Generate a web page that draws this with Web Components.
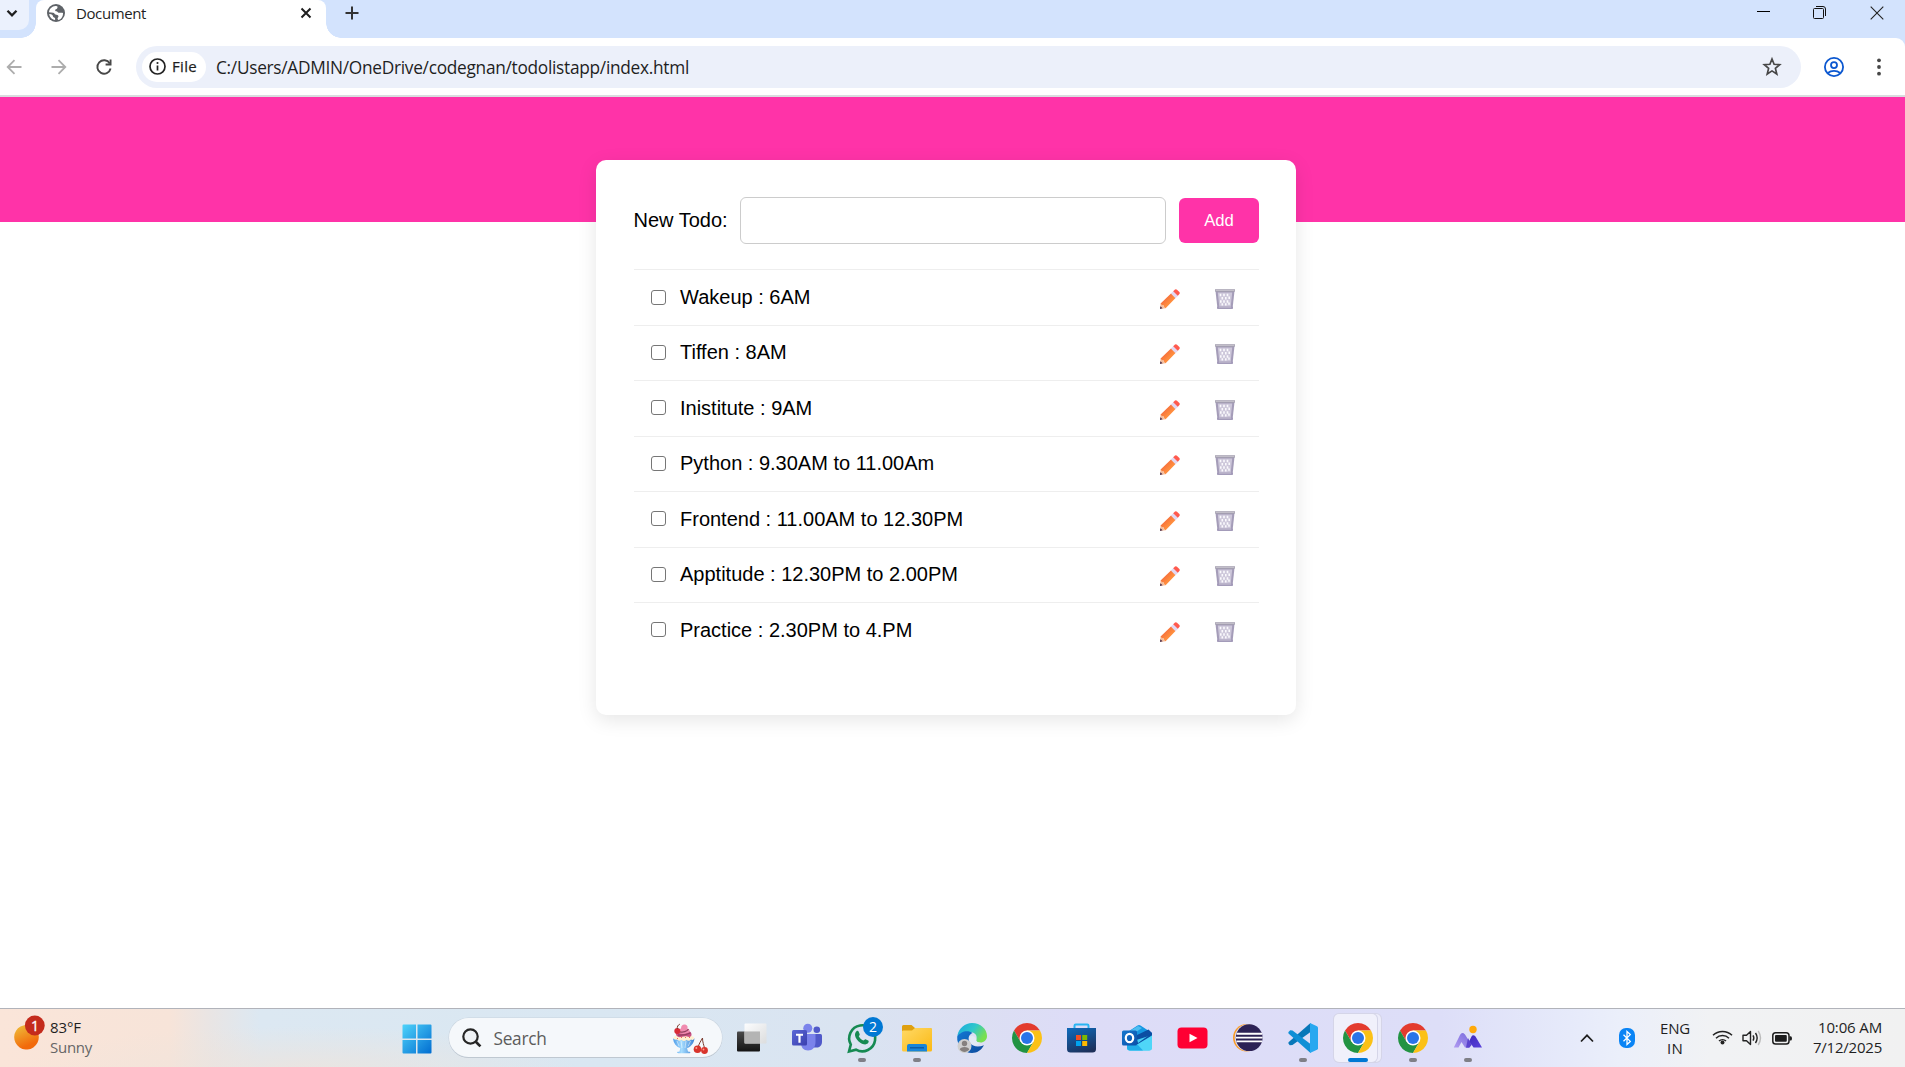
<!DOCTYPE html>
<html lang="en">
<head>
<meta charset="utf-8">
<title>Document</title>
<style>
html,body{margin:0;height:100%;background:#fff;overflow:hidden}
body{font-family:"Open Sans","Noto Sans",sans-serif;color:#1f1f1f}
</style>
</head>
<body>
<desktop-screen></desktop-screen>
<script>
const define = (name, html, init) => {
  const t = document.createElement('template');
  t.innerHTML = html;
  customElements.define(name, class extends HTMLElement {
    connectedCallback() {
      if (this.shadowRoot) return;
      this.attachShadow({mode: 'open'}).appendChild(t.content.cloneNode(true));
      if (init) init.call(this, this.shadowRoot);
    }
  });
};

/* Single-line label; "w" is the advance width the label is tracked to. */
define('fit-text', `<style>:host{display:block;white-space:nowrap;flex:none}span{display:inline-block}</style><span><slot></slot></span>`, function (root) {
  const w = parseFloat(this.getAttribute('w'));
  const s = root.querySelector('span');
  const n = this.textContent.length;
  const now = s.getBoundingClientRect().width;
  s.style.letterSpacing = ((w - now) / n) + 'px';
  this.style.width = w + 'px';
});

const ICONS = {
  chevdown: [12, 12, `<path d="M1.5 3.8 6 8.3l4.500-4.500" fill="none" stroke="#1f1f1f" stroke-width="2.300"/>`],
  globe: [18, 18, `<circle cx="9" cy="9" r="9" fill="#5f6368"/><path d="M8.500 2.100c2.500-.2 2.400 1.400 1.600 2.300-.6.700-1.700.6-1.900 1.500-.2.800.4 1.200 1.200 1.300 1.200.1 1.300 1.300 2.300 1.500 1.200.2 2.700-.4 4.300.2.300 3-1.500 6-4.300 7-.8-.3-1.300-.9-1.100-1.700.2-.9 1.100-1.300.8-2.300-.3-1.100-1.800-.9-2.800-1.300-1-.5-1.300-1.700-2.400-1.900-1.300-.1-2.900-.1-4.200-.5C2.300 5 5 2.300 8.500 2.100z" fill="#fff"/><path d="M2.200 9.900c1.100.1 2.300.3 3.100 1 .8.700.5 1.700 1.300 2.300.7.500 1.500.4 1.500 1.300V16C5 15.500 2.500 12.900 2.200 9.900z" fill="#fff"/>`],
  tabclose: [12, 12, `<path d="M1.500 1.500l9 9m0-9-9 9" stroke="#1f1f1f" stroke-width="2"/>`],
  plus: [14, 14, `<path d="M7 .5v13M.5 7h13" stroke="#333" stroke-width="2"/>`],
  min: [13, 13, `<path d="M0 5.500h13" stroke="#000" stroke-width="1"/>`],
  restore: [13, 13, `<path d="M3 .5h7a2.500 2.500 0 0 1 2.500 2.500v7" fill="none" stroke="#111"/><rect x=".5" y="2.500" width="10" height="10" rx="1" fill="none" stroke="#111"/>`],
  winclose: [14, 14, `<path d="M.7.700l12.600 12.600m0-12.600L.7 13.300" stroke="#222" stroke-width="1.100"/>`],
  back: [16, 16, `<path d="M15.500 8H2m6.500-6.800L1.700 8l6.800 6.800" fill="none" stroke="#adadad" stroke-width="1.800"/>`],
  fwd: [16, 16, `<path d="M.5 8H14M7.500 1.200 14.300 8l-6.800 6.800" fill="none" stroke="#adadad" stroke-width="1.800"/>`],
  reload: [16, 16, `<path d="M13.800 4.500A6.700 6.700 0 1 0 14.600 9.500" fill="none" stroke="#474747" stroke-width="1.900"/><path d="M15.500.5v6H9.600V4.600h4V.500z" fill="#474747"/>`],
  info: [17, 17, `<circle cx="8.500" cy="8.500" r="7.500" fill="none" stroke="#222" stroke-width="1.700"/><path d="M8.500 7.500v5" stroke="#222" stroke-width="1.700"/><circle cx="8.500" cy="5" r="1.050" fill="#222"/>`],
  star: [20, 19, `<path d="M10 2l2.100 5.300 5.600.4-4.300 3.700 1.400 5.600L10 13.900 5.200 17l1.400-5.600L2.300 7.700l5.600-.4z" fill="none" stroke="#474747" stroke-width="1.700"/>`],
  profile: [20, 20, `<circle cx="10" cy="10" r="9.100" fill="none" stroke="#0b57d0" stroke-width="1.800"/><circle cx="10" cy="8.100" r="3" fill="none" stroke="#0b57d0" stroke-width="1.800"/><path d="M3.800 16c1.800-1.500 3.800-2.200 6.200-2.200s4.400.7 6.200 2.200" fill="none" stroke="#0b57d0" stroke-width="1.800"/>`],
  dots: [6, 18, `<circle cx="3" cy="2.300" r="1.900" fill="#474747"/><circle cx="3" cy="9" r="1.900" fill="#474747"/><circle cx="3" cy="15.700" r="1.900" fill="#474747"/>`],
  pencil: [20, 20, `<defs><linearGradient id="a" x1="0" y1="0" x2="1" y2="1"><stop offset=".25" stop-color="#f4693b"/><stop offset=".6" stop-color="#ff8d3e"/></linearGradient></defs><path d="M0 20l.6-5.800L5.600 19.300z" fill="#f3bd9c"/><path d="M0 20l.3-2.700 2.300 2z" fill="#4b3150"/><path d="M.6 14.500 11.500 4 16 8.500 5.600 19.300 4.200 18 3.600 16.400 1.800 16z" fill="url(#a)"/><path d="M10.800 4.600l2.800-2.700 4.700 4.500L15.500 9.200z" fill="#e2d8f2"/><path d="M13.200 2.300 15 .6q1-.9 2 .1L19.400 3.100q.9 1 0 2L17.800 6.800z" fill="#ff5a4e"/>`],
  trash: [20, 20, `<path d="M.5 2h19l-2 18H2.500z" fill="#a49cb8"/><path d="M2.800 3.500h14.400l-1.500 14H4.300z" fill="#cdc7da"/><path d="M5.500 4.800v2.500M9 4.800v2.500M12.500 4.800v2.500M7.300 8v2.500M10.800 8v2.500M14.200 7.500v2.500M5.800 11.200v2.500M9 11.200v2.500M12.500 11.200v2.500M7.300 14.300v2.200M10.800 14.300v2.200M14 13.500v2.200" stroke="#fbfafd" stroke-width="1.600"/><rect width="20" height="2.700" rx=".8" fill="#a39eae"/><rect x=".6" y=".5" width="18.800" height="1.200" fill="#cfccd5"/><rect x="2" y="17.500" width="16" height="2.300" rx=".7" fill="#a39ab9"/><path d="M4 18h12" stroke="#c9c3d5"/>`],
  weather: [32, 36, `<defs><linearGradient id="a" x1=".15" y1="0" x2=".6" y2="1"><stop stop-color="#efbd3a"/><stop offset=".85" stop-color="#f26a0b"/></linearGradient></defs><path d="M12 34a12.300 12.300 0 1 1 2 0z" transform="translate(-.5 .5)" fill="url(#a)"/><circle cx="20.800" cy="10.500" r="9.900" fill="#c42b1c"/>`],
  win: [30, 30, `<defs><linearGradient id="a" gradientUnits="userSpaceOnUse" x1="0" y1="0" x2="30" y2="30"><stop stop-color="#4fd5fb"/><stop offset="1" stop-color="#006bd0"/></linearGradient></defs><path d="M1.500.5H14v14H.5V1.500a1 1 0 0 1 1-1zM15.500.5H28.500a1 1 0 0 1 1 1v13h-14zM.5 16H14v13.500H1.500a1 1 0 0 1-1-1zM15.500 16h14v12.500a1 1 0 0 1-1 1h-13z" fill="url(#a)"/>`],
  search: [20, 20, `<circle cx="8.500" cy="8.500" r="7.200" fill="#eff2f5" stroke="#262626" stroke-width="2.200"/><path d="M13.800 13.800l4.600 4.600" stroke="#262626" stroke-width="2.700"/>`],
  sundae: [36, 30, `<defs><linearGradient id="a" x1="0" y1="0" x2="1" y2="0"><stop stop-color="#4e9be8"/><stop offset=".4" stop-color="#a6ddff"/><stop offset="1" stop-color="#3b82d5"/></linearGradient></defs><path d="M1 14.500h21.500c-.6 5-4 8.700-7.500 9.800l1 3.200c3 .3 3 1.500 1 1.800H6.500c-2-.5-2-1.500 1-1.800l.8-3.200C4 22.500 1.500 19 1 14.500z" fill="url(#a)"/><path d="M5 17l2 5M9 17l1 7M14 17l-1 7M18.500 17l-2.200 5" stroke="#fff" stroke-width=".8" opacity=".6"/><path d="M1.500 13.500C4 9 19 9 22 13.500c.8 2-1.500 3-3 2-1.500 2-3.500 1.500-4.500.3-1.500 1.700-3.700 1.500-5 0-1.300 1.300-3.500 1.200-4.500-.2-2.400.3-4-.5-3.500-2.100z" fill="#fff0d1"/><path d="M4 10c0-3 3-4 7-4 6 0 9 2 8.500 5-.5 2.500-3 2-4.500 1.500-3-.8-7 1.500-9 .3C5 12.300 4 11.300 4 10z" fill="#c94f83"/><path d="M9 4.500C9 1.500 11 0 13.200.5c2.300.6 3 2.500 2 4 1.800.3 3 1.800 2.300 3.300-2 2.500-9 3-11.500.5 0-2.200 1-3.500 3-3.800z" fill="#f08bb0"/><path d="M8 7.800c3 1 7-.3 8.500-2.800M6 11c4 .5 9-.5 12.500-2" stroke="#93405f" stroke-width="1.300" fill="none"/><circle cx="5.300" cy="7" r="3" fill="#d82a35"/><path d="M5.300 5C5 2.500 6 1 7.800.2M30.500 14c-1.500 3-3.500 5-4.500 10m4.500-10c0 4 1.300 7 2 10" stroke="#7a3a2d" fill="none"/><circle cx="25.500" cy="25.300" r="3.800" fill="#d8342c"/><circle cx="32.500" cy="26.500" r="3.400" fill="#d8342c"/><circle cx="24.300" cy="24" r="1" fill="#ff9c8c"/><circle cx="31.500" cy="25.500" r=".9" fill="#ff9c8c"/><path d="M5 14l1 1m3-2 1 1m4-1-1 1m4-1 1 1" stroke="#ef6d58"/>`],
  taskview: [30, 30, `<defs><linearGradient id="a" x1="0" y1="0" x2="0" y2="1"><stop stop-color="#4a4a4a"/><stop offset="1" stop-color="#141414"/></linearGradient><linearGradient id="b" x1="0" y1="0" x2="1" y2="1"><stop stop-color="#fff"/><stop offset="1" stop-color="#dcdcdc"/></linearGradient></defs><rect y="8.500" width="23" height="20" rx="1" fill="url(#a)"/><rect x="7.500" y=".5" width="22" height="20" rx="1" fill="url(#b)" opacity=".92"/><path d="M7.500 8.500H23v12H7.500z" fill="#b4b4b4"/>`],
  teams: [30, 30, `<defs><linearGradient id="a" x1="0" y1="0" x2="1" y2="1"><stop stop-color="#5b68d6"/><stop offset="1" stop-color="#3a3fae"/></linearGradient></defs><circle cx="15.800" cy="5.300" r="4.500" fill="#7b83eb"/><circle cx="24.800" cy="6.800" r="3.300" fill="#5059c9"/><path d="M20 11h8.500q1.500 0 1.500 1.500V19c0 3.500-2.500 5.500-5.500 5.500H20z" fill="#5059c9"/><path d="M9 11h14.500V19c0 5-3 8.500-7.500 8.500S9 24.500 9 20z" fill="#7b83eb"/><rect y="7" width="15" height="15.500" rx="1.500" fill="url(#a)"/><path d="M4 10.700h7v2H8.600v7H6.400v-7H4z" fill="#fff"/>`],
  whatsapp: [30, 30, `<path d="M2 28.500l1.800-7A13 13 0 1 1 9 26.700z" fill="none" stroke="#168a52" stroke-width="2.600"/><path d="M9.500 8.300c.8-.8 1.700-.5 2.100.3l1.100 2.600c.3.700-.9 1.700-.9 2.100.9 1.900 2.400 3.300 4.500 4.200.6 0 1.600-1.500 2.100-1.300l2.800 1.400c1 .6.300 2.300-.5 3-2 1.500-4.900.7-7.400-.9-2.700-1.800-5.100-4.800-5.300-7.500-.100-1.500.5-3 1.500-3.900z" fill="#168a52"/>`],
  folder: [30, 30, `<defs><linearGradient id="a" x1="0" y1="0" x2="1" y2="1"><stop stop-color="#ffd966"/><stop offset="1" stop-color="#fbb914"/></linearGradient></defs><path d="M0 9V3.500q0-1.500 1.500-1.500h8l3.500 3H28q2 0 2 2v6H0z" fill="#dfa00f"/><path d="M0 8.500Q0 7.500 1.500 7.500H10l3-2.500H28.500q1.500 0 1.500 1.500V27q0 1.500-1.500 1.500h-27Q0 28.500 0 27z" fill="url(#a)"/><path d="M5 28.500V23q0-2 2-2h16q2 0 2 2v5.500z" fill="#1685d9"/><path d="M8 24.800h14" stroke="#0b559d" stroke-width="1.300"/>`],
  edge: [30, 30, `<defs><linearGradient id="a" x1="0" y1="0" x2="1" y2=".5"><stop stop-color="#18a8e0"/><stop offset=".55" stop-color="#30c7cb"/><stop offset="1" stop-color="#79e04f"/></linearGradient><linearGradient id="b" x1="0" y1="0" x2="1" y2="1"><stop stop-color="#1278d4"/><stop offset="1" stop-color="#0d4a9c"/></linearGradient></defs><path d="M.5 12C2 5 8 0 15 0c8.500 0 15 6 15 13 0 4-3 6.500-6.500 6.500-4 0-5.500-1.500-4-3.500 1-4-2-7-7-7C7.500 8.500 3 10 .5 13z" fill="url(#a)"/><path d="M.2 13.500C3 8.500 11 6.500 15.500 10c-4 1.500-5 6-2.500 10 2.500 3.500 8 4.500 14 2.300C24 27.500 20 30 15 30 7 30-.5 23 .2 13.500z" fill="url(#b)"/><path d="M12 14c2-2 6-1 7.500 2-.5 2 .5 3.500 4 3.500l-4 3c-5 0-8-4-7.500-8.500z" fill="#e3eaf5"/><circle cx="7.500" cy="23" r="7" fill="#cfcfcf"/><circle cx="7.500" cy="20.500" r="2.700" fill="#85807e"/><path d="M2.800 26.500c0-3.500 9.400-3.500 9.400 0-2.600 3.200-6.800 3.200-9.400 0z" fill="#85807e"/>`],
  chrome: [30, 30, `<path d="M2.010 7.500A15 15 0 0 1 27.990 7.500H15L8.500 18.750z" fill="#e33b2e"/><path d="M2.010 7.500 8.500 18.750h13L15 30A15 15 0 0 1 2.010 7.500z" fill="#229342"/><path d="M27.990 7.500H15l6.500 11.250L15 30A15 15 0 0 0 27.990 7.500z" fill="#fbc116"/><circle cx="15" cy="15" r="7.500" fill="#fff"/><circle cx="15" cy="15" r="6" fill="#2a74e8"/>`],
  store: [30, 30, `<defs><linearGradient id="a" x1=".3" y1="0" x2=".7" y2="1"><stop stop-color="#0f66b4"/><stop offset="1" stop-color="#1d2f59"/></linearGradient></defs><path d="M7.500 6V2.700Q7.500 1.500 8.700 1.500h11.600Q21.500 1.500 21.500 2.700V6" fill="none" stroke="#29b5f3" stroke-width="2"/><path d="M0 5h29v21q0 3.500-3.500 3.500H3.500Q0 29.500 0 26z" fill="url(#a)"/><path d="M9 12h5v5h-5z" fill="#f25022"/><path d="M15.200 12h5v5h-5z" fill="#7fba00"/><path d="M9 18h5v5h-5z" fill="#00a4ef"/><path d="M15.200 18h5v5h-5z" fill="#ffb900"/>`],
  outlook: [30, 30, `<defs><linearGradient id="a" x1="0" y1="0" x2="1" y2="1"><stop stop-color="#1678cf"/><stop offset="1" stop-color="#0b4fa8"/></linearGradient></defs><path d="M4 10 15.500 2.500q1.500-1 3 0L30 10v4L8 25z" fill="#1597e2"/><path d="M13 13l13.500-6.500L30 10v4l-14 8z" fill="#0c4ea3"/><path d="M6 9l10-6 4 2-9 6z" fill="#4dbdf1"/><path d="M30 12v12.500q0 3-3 3H8q-3 0-3-3V20z" fill="#45cff5"/><path d="M15 16v10l15-13.500V10L16 20z" fill="#0c4ea3"/><path d="M15 21.500l15-9v12q0 3-3 3H8q-3 0-3-3z" fill="#4fd6f8"/><path d="M5 22l10-1 6 6.500H8q-3 0-3-3z" fill="#22aee9"/><rect y="7.500" width="15" height="15" rx="1.500" fill="url(#a)"/><ellipse cx="7.500" cy="15" rx="3.700" ry="4.200" fill="none" stroke="#fff" stroke-width="2.200"/>`],
  youtube: [30, 30, `<rect x="-.5" y="4.500" width="30" height="21" rx="4" fill="#ff0033"/><path d="M11.500 10.800l8 4.200-8 4.200z" fill="#fff"/>`],
  eclipse: [30, 30, `<circle cx="13.700" cy="14.700" r="13.700" fill="#f99d2a"/><circle cx="15.200" cy="14.700" r="13.500" fill="#dcdcf6"/><circle cx="16.200" cy="14.700" r="13.400" fill="#2c2255"/><path d="M3.500 10.800h25.500M3 14.600h26.600M3.500 18.400h25.500" stroke="#fff" stroke-width="1.900"/>`],
  vscode: [30, 30, `<path d="M22.500 0v9L4.500 22 1.800 22.300.6 20.700Q0 19.800.8 19z" fill="#0877b9"/><path d="M22.500 30V21L4.500 7.500 2.200 7.200.5 9Q0 10 .8 10.800z" fill="#0f8fd6"/><path d="M22 0l7 3.200q1 .5 1 1.500V25.300q0 1-1 1.500L22 30z" fill="#28a8f0"/>`],
  photo: [30, 30, `<defs><linearGradient id="a" x1="0" y1="1" x2="1" y2="0"><stop stop-color="#b19bf1"/><stop offset="1" stop-color="#7568dc"/></linearGradient><linearGradient id="b" x1="0" y1="0" x2="1" y2="1"><stop stop-color="#3c27b7"/><stop offset="1" stop-color="#5a42dc"/></linearGradient></defs><path d="M13 24.500l5.500-11q1.500-2.500 4 0L29 24.500h-8.500l-2-3-2.500 3z" fill="url(#b)"/><path d="M.8 24.500 7 12q2-3.500 5-.5l6.500 10.500-2.500 2.500h-4L8.500 19 5.500 24.500z" fill="url(#a)"/><path d="M18.500 22l-3.500-7-2 9.500h3.500z" fill="#5b43cf"/><circle cx="20" cy="6.500" r="3.700" fill="#ffa90a"/>`],
  chevup: [14, 10, `<path d="M1 8.500 7 2.300l6 6.200" fill="none" stroke="#1f1f1f" stroke-width="1.700"/>`],
  bt: [16, 20, `<rect width="16" height="20" rx="7" fill="#0a84f5"/><path d="M4.500 6.700l6.800 6.700L8 16.500v-13l3.300 3.100-6.800 6.700" fill="none" stroke="#fff" stroke-width="1.300"/>`],
  wifi: [21, 16, `<g fill="none" stroke="#222" stroke-width="1.500"><path d="M1 6.300a13.500 13.500 0 0 1 19 0M4 9.200a9.300 9.300 0 0 1 13 0M7 12a5.200 5.200 0 0 1 7 0"/></g><circle cx="10.500" cy="13.500" r="2" fill="#222"/>`],
  sound: [20, 18, `<path d="M1 6.300h3.500L8.500 2.500v13L4.500 11.700H1z" fill="none" stroke="#222" stroke-width="1.400" stroke-linejoin="round"/><path d="M11 6.300q1.700 2.700 0 5.400M13.500 4q3.300 5 0 10" fill="none" stroke="#222" stroke-width="1.400"/><path d="M16.200 2q4.600 7 0 14" fill="none" stroke="#bbb" stroke-width="1.400"/>`],
  battery: [20, 13, `<rect x=".8" y=".8" width="16.200" height="11.200" rx="2.800" fill="none" stroke="#1d1d1d" stroke-width="1.500"/><rect x="3" y="3" width="11.800" height="6.800" rx="1" fill="#1d1d1d"/><path d="M17.500 4.200h1q1.500 0 1.500 2.200t-1.500 2.200h-1z" fill="#1d1d1d"/>`]
};
define('ui-icon', `<style>:host{display:block;flex:none;line-height:0}svg{display:block;overflow:visible}</style>`, function (root) {
  const [w, h, body] = ICONS[this.getAttribute('name')];
  root.innerHTML += `<svg width="${w}" height="${h}" viewBox="0 0 ${w} ${h}">${body}</svg>`;
});

define('tab-strip', `<style>
:host{display:flex;height:38px;background:#d3e3fd;box-sizing:border-box}
.menu{width:29px;height:30px;background:#ebf1fd;border-radius:0 0 10px 0;display:flex;box-sizing:border-box;padding:7px 0 0 6px;flex:none}
.tab{margin-left:7px;width:290px;height:38px;background:#fff;border-radius:8px 8px 0 0;display:flex;align-items:center;box-sizing:border-box;padding:0 14px 12px 11px;position:relative;flex:none}
.tab::before,.tab::after{content:"";position:absolute;bottom:0;width:15px;height:15px}
.tab::before{left:-15px;background:radial-gradient(circle at 0 0,transparent 14.500px,#fff 15px)}
.tab::after{right:-15px;background:radial-gradient(circle at 100% 0,transparent 14.500px,#fff 15px)}
fit-text{font-size:15px;line-height:26px;margin:0 0 1px 11px}
.x{margin-left:auto}.plus{margin:6px 0 0 19px}
.ctl{margin-left:auto;display:flex;gap:43px;padding:6px 21px 0 0}
.ctl :nth-child(2){margin-right:1px}
</style><div class="menu"><ui-icon name="chevdown"></ui-icon></div>
<div class="tab"><ui-icon name="globe"></ui-icon><fit-text w="70">Document</fit-text><ui-icon class="x" name="tabclose"></ui-icon></div>
<ui-icon class="plus" name="plus"></ui-icon>
<div class="ctl"><ui-icon name="min"></ui-icon><ui-icon name="restore"></ui-icon><ui-icon name="winclose"></ui-icon></div>`);

define('address-bar', `<style>
:host{display:block;background:#d3e3fd}
.bar{display:flex;align-items:center;height:59px;box-sizing:border-box;border-bottom:2px solid #dadcdf;padding:0 23px 0 6px;background:#fff;border-radius:0 9px 0 0}
.fwd{margin-left:29px}.reload{margin-left:28.500px}
.omni{margin-left:24.500px;width:1665px;height:42px;border-radius:21px;background:#ecf0fa;display:flex;align-items:center;box-sizing:border-box;padding:0 19.500px 0 6px}
.chip{width:64px;height:30px;border-radius:15px;background:#fff;display:flex;align-items:center;box-sizing:border-box;padding-left:6.500px}
.chip fit-text{font-size:15px;font-weight:500;line-height:30px;margin:0 0 2px 6.500px;-webkit-text-stroke:.25px #1f1f1f}
.url{font-size:17.300px;line-height:42px;margin:2px 0 0 10px}
.star{margin-left:auto}.profile{margin-left:22.500px}.dots{margin-left:auto}
</style><div class="bar"><ui-icon name="back"></ui-icon><ui-icon class="fwd" name="fwd"></ui-icon><ui-icon class="reload" name="reload"></ui-icon>
<div class="omni"><div class="chip"><ui-icon name="info"></ui-icon><fit-text w="25">File</fit-text></div><fit-text class="url" w="473">C:/Users/ADMIN/OneDrive/codegnan/todolistapp/index.html</fit-text><ui-icon class="star" name="star"></ui-icon></div>
<ui-icon class="profile" name="profile"></ui-icon><ui-icon class="dots" name="dots"></ui-icon></div>`);

define('todo-item', `<style>
:host{display:flex;align-items:center;height:55.450px;box-sizing:border-box;border-top:1px solid #eee;padding:0 24px 0 17px;font-size:20px}
.box{width:15px;height:15px;box-sizing:border-box;border:1px solid #767676;border-radius:3px;flex:none;margin-bottom:1px}
.label{margin:0 0 1.300px 14px;line-height:24px}
.edit{margin:2.700px 35px 0 auto}.del{margin-top:2.700px}
</style><span class="box" role="checkbox"></span><span class="label"><slot></slot></span><ui-icon class="edit" name="pencil"></ui-icon><ui-icon class="del" name="trash"></ui-icon>`);

define('todo-page', `<style>
:host{display:block;height:911px;background:#fff;font-family:"Liberation Sans",Arial,sans-serif;color:#000}
.banner{height:125px;background:#ff33a8}
.card{position:relative;width:700px;height:555px;margin:-62px 0 0 596px;box-sizing:border-box;background:#fff;border-radius:10px;box-shadow:0 5px 19px rgba(0,0,0,.1);padding:37px 37px 0 38px}
form{display:flex;align-items:center;height:47px;margin:0 0 25.400px;font-size:20px}
.new{line-height:24px;margin:0 0 2px -.5px}
.field{margin-left:auto;width:426px;height:47px;box-sizing:border-box;border:1px solid #ccc;border-radius:6px}
.add{margin-left:13px;width:80px;height:45px;border-radius:6px;background:#ff33a8;color:#fff;font-size:16.670px;line-height:45px;text-align:center}
</style><div class="banner"></div><div class="card"><form><span class="new">New Todo:</span><span class="field"></span><span class="add">Add</span></form>
<todo-item>Wakeup : 6AM</todo-item><todo-item>Tiffen : 8AM</todo-item><todo-item>Inistitute : 9AM</todo-item><todo-item>Python : 9.30AM to 11.00Am</todo-item><todo-item>Frontend : 11.00AM to 12.30PM</todo-item><todo-item>Apptitude : 12.30PM to 2.00PM</todo-item><todo-item>Practice : 2.30PM to 4.PM</todo-item></div>`);

define('task-app', `<style>
:host{display:flex;width:55.070px;height:58px;flex:none;justify-content:center;padding-top:14px;box-sizing:border-box;position:relative}
:host([run])::after{content:"";position:absolute;bottom:5px;left:50%;margin-left:-4px;width:8px;height:4px;border-radius:2px;background:#7f7f87}
:host([active])::after{width:20px;margin-left:-10px;background:#0078d4}
:host([active])::before{content:"";position:absolute;left:3.500px;top:5px;width:43px;height:48px;border-radius:5px;background:#f0f0fb;box-shadow:0 0 0 1px #d5d5e8,4px 0 0 0 #ececfa,4px 0 0 1px #d5d5e8}
ui-icon{position:relative;width:30px}
.badge{position:absolute;left:28.500px;top:8px;width:20px;height:20px;border-radius:50%;background:#0078d4;color:#fff;font-size:14px;line-height:20px;text-align:center}
</style>`, function (root) {
  const b = this.getAttribute('badge');
  root.innerHTML += `<ui-icon name="${this.getAttribute('icon')}"></ui-icon>` + (b ? `<span class="badge">${b}</span>` : '');
});

define('task-bar', `<style>
:host{display:flex;height:59px;box-sizing:border-box;border-top:1px solid #b1b3ba;font-size:15px;
background:radial-gradient(ellipse 280px 45px at 300px 62px,rgba(238,228,220,.8),rgba(238,228,220,0)),linear-gradient(90deg,#fae5d9 0,#f7e4d9 170px,#e9e5e4 210px,#dce8f2 260px,#d9e7f2 600px,#dae4f1 850px,#dcdff3 980px,#dddcf7 1080px,#dddef8 1440px,#e6eafa 1570px,#ebeffa 1620px,#f1f2f4 1710px,#f1f1f1 1905px)}
.weather{display:flex;width:401.500px;flex:none;padding:6px 0 0 14px;box-sizing:border-box;position:relative}
.one{position:absolute;left:25px;top:7px;width:20px;line-height:20px;text-align:center;color:#fff;font-size:14px;-webkit-text-stroke:.3px}
.col{line-height:20px;display:flex;flex-direction:column}
.weather .col{margin:2px 0 0 4px}
.grey{color:#666}
.win{margin-top:14.500px}
.search{margin:9px 3px 0 17px;width:273px;height:39px;flex:none;border-radius:20px;background:#f5f8fb;box-shadow:0 0 0 .5px #c8d3de,0 1px 0 #b6bcc4;display:flex;align-items:center;box-sizing:border-box;padding:0 14px 0 13.500px}
.search fit-text{font-size:17.300px;line-height:38px;color:#5c5c5c;margin:3px auto 0 11.500px}
.search ui-icon:last-child{margin-top:2px}
.tray{margin-left:auto;display:flex;padding:0 23px 0 0;align-items:flex-start}
.up{margin:24px 25px 0 0}.bt{margin:19px 25px 0 0}.lang{align-items:center;margin:9px 22px 0 0}
.wifi{margin:20px 9px 0 0}.snd{margin:20px 10px 0 0}.bat{margin:23px 21px 0 0}
.clock{align-items:flex-end;margin-top:8px}
</style><div class="weather"><ui-icon name="weather"></ui-icon><span class="one">1</span><div class="col"><fit-text w="31">83°F</fit-text><fit-text class="grey" w="42">Sunny</fit-text></div></div>
<ui-icon class="win" name="win"></ui-icon>
<div class="search"><ui-icon name="search"></ui-icon><fit-text w="53">Search</fit-text><ui-icon name="sundae"></ui-icon></div>
<task-app icon="taskview"></task-app><task-app icon="teams"></task-app><task-app icon="whatsapp" badge="2" run></task-app><task-app icon="folder" run></task-app><task-app icon="edge"></task-app><task-app icon="chrome"></task-app><task-app icon="store"></task-app><task-app icon="outlook"></task-app><task-app icon="youtube"></task-app><task-app icon="eclipse"></task-app><task-app icon="vscode" run></task-app><task-app icon="chrome" run active></task-app><task-app icon="chrome" run></task-app><task-app icon="photo" run></task-app>
<div class="tray"><ui-icon class="up" name="chevup"></ui-icon><ui-icon class="bt" name="bt"></ui-icon><div class="col lang"><fit-text w="30">ENG</fit-text><fit-text w="16">IN</fit-text></div><ui-icon class="wifi" name="wifi"></ui-icon><ui-icon class="snd" name="sound"></ui-icon><ui-icon class="bat" name="battery"></ui-icon><div class="col clock"><fit-text w="64">10:06 AM</fit-text><fit-text w="69">7/12/2025</fit-text></div></div>`);

define('desktop-screen', `<style>:host{display:flex;flex-direction:column;width:1905px;height:1067px;overflow:hidden}</style><tab-strip></tab-strip><address-bar></address-bar><todo-page></todo-page><task-bar></task-bar>`);
</script>
</body>
</html>
